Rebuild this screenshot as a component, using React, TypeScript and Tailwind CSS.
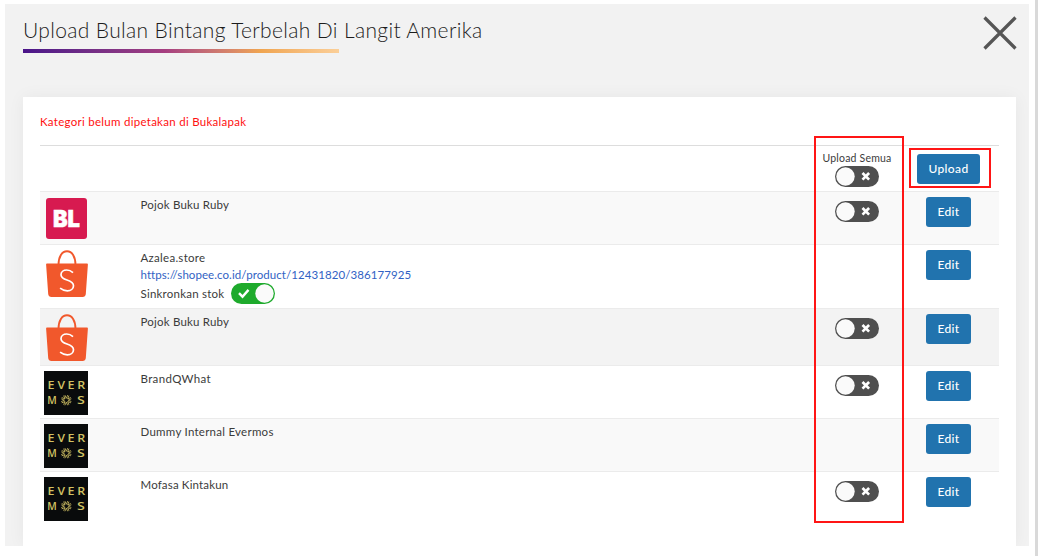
import React from "react";

function Toggle({ on = false }: { on?: boolean }) {
  return (
    <svg width="44" height="22" viewBox="0 0 44 22" className="block shrink-0">
      <rect x="0" y="0" width="44" height="21" rx="10.5" fill={on ? "#1eaa2c" : "#4f4f4f"} />
      <circle cx={on ? 33.5 : 10.5} cy="10.5" r="9.2" fill="#fafafa" />
      {on ? (
        <path d="M8 10.2l3.5 3.5 6-6.8" fill="none" stroke="#fff" strokeWidth="2.4" />
      ) : (
        <path d="M27.5 7l6.6 6.6M34.1 7l-6.6 6.6" stroke="#fff" strokeWidth="2.7" />
      )}
    </svg>
  );
}

function Bukalapak() {
  return (
    <svg width="41" height="41" viewBox="0 0 41 41" className="mt-1.5 ml-1.5 block">
      <rect width="41" height="41" rx="3" fill="#d71a50" />
      <text
        x="7"
        y="29"
        textLength="27"
        lengthAdjust="spacingAndGlyphs"
        fontFamily="Inter"
        fontWeight="900"
        fontSize="23.5"
        fill="#fff"
        stroke="#fff"
        strokeWidth="0.5"
      >
        BL
      </text>
    </svg>
  );
}

function Shopee() {
  return (
    <svg width="42" height="48" viewBox="0 0 42 48" className="mt-[5px] ml-[5.5px] block">
      <path d="M12.5 15C12.5 6.5 16 1.2 21 1.2S29.5 6.5 29.5 15" fill="none" stroke="#f1582c" strokeWidth="1.9" />
      <path d="M1 13.5h40q1 0 .9 1L39.8 44Q39.5 47 36.5 47h-31Q2.5 47 2.2 44L.1 14.5q-.1-1 .9-1z" fill="#f1582c" />
      <path
        d="M27 22.6C24.9 20.7 23 20 20.7 20c-3.3 0-5.7 1.9-5.7 4.7 0 3.2 2.6 4.2 6 5.3 3.8 1.2 6.5 2.5 6.5 5.7 0 3.2-2.7 5.1-6.2 5.1-2.7 0-5-.8-7.2-2.6"
        fill="none"
        stroke="#fff"
        strokeWidth="1.7"
      />
    </svg>
  );
}

function Evermos() {
  return (
    <svg width="44" height="44" viewBox="0 0 44 44" className="mt-[5px] ml-1 block">
      <rect width="44" height="44" fill="#090b0c" />
      <g fill="#d2c264" fontFamily="Open Sans" fontSize="10" fontWeight="600">
        <text x="3.5" y="18" textLength="7" lengthAdjust="spacingAndGlyphs">E</text>
        <text x="13.5" y="18" textLength="7.5" lengthAdjust="spacingAndGlyphs">V</text>
        <text x="23.5" y="18" textLength="7" lengthAdjust="spacingAndGlyphs">E</text>
        <text x="33.2" y="18" textLength="8" lengthAdjust="spacingAndGlyphs">R</text>
        <text x="3.3" y="32.6" textLength="9.5" lengthAdjust="spacingAndGlyphs">M</text>
        <text x="33" y="32.6" textLength="7.8" lengthAdjust="spacingAndGlyphs">S</text>
      </g>
      <g stroke="#d2c264" strokeWidth="0.8" fill="none">
        {[0, 45, 90, 135, 180, 225, 270, 315].map((a) => (
          <path key={a} d="M22.3 27.3l-1.4-3.2M22.3 27.3l1.4-3.2" transform={`rotate(${a} 22.3 29.2)`} />
        ))}
      </g>
    </svg>
  );
}

function Action({ children }: { children: React.ReactNode }) {
  return (
    <button className="block h-[29.5px] rounded-[3px] bg-[#2173ae] px-[11.5px] text-[12px] leading-[28px] font-medium tracking-[0.36px] text-white">
      {children}
    </button>
  );
}

type Row = { logo: React.ReactNode; name: string; spacing: string; size: string; toggle: boolean; link?: boolean };

const rows: Row[] = [
  { logo: <Bukalapak />, name: "Pojok Buku Ruby", spacing: "tracking-[0.2px]", size: "h-[53px] bg-[#f9f9f9]", toggle: true },
  { logo: <Shopee />, name: "Azalea.store", spacing: "tracking-[0.28px]", size: "h-[64px]", toggle: false, link: true },
  { logo: <Shopee />, name: "Pojok Buku Ruby", spacing: "tracking-[0.2px]", size: "h-[57px] bg-[#f3f3f3]", toggle: true },
  { logo: <Evermos />, name: "BrandQWhat", spacing: "tracking-[0.36px]", size: "h-[53px]", toggle: true },
  { logo: <Evermos />, name: "Dummy Internal Evermos", spacing: "tracking-[0.26px]", size: "h-[53px] bg-[#f9f9f9]", toggle: false },
  { logo: <Evermos />, name: "Mofasa Kintakun", spacing: "tracking-[0.16px]", size: "h-[53px]", toggle: true },
];

export default function App() {
  return (
    <div className="relative flex h-[556px] w-[1038px] justify-between overflow-hidden bg-white pt-1 pl-[5px] font-['Lato','Open_Sans',sans-serif] text-[#3b3b3b]">
      <div className="flex h-[542px] w-[1024px] flex-col overflow-hidden bg-[#f2f2f2] px-[18px]">
        <header className="flex h-[93px] w-[994px] shrink-0 items-start justify-between">
          <div>
            <h1 className="mt-[11px] h-[34px] text-[21px] leading-[30px] font-light tracking-[0.35px] whitespace-nowrap text-[#1c1c1c]">
              Upload Bulan Bintang Terbelah Di Langit Amerika
            </h1>
            <div className="h-[4px] w-[316px] bg-linear-to-r from-[#4a1389] via-[#a63e80] via-45% to-[#fbcf98]">
              <div className="ml-[142px] h-full w-[174px] bg-linear-to-r from-[#a63e80] via-[#f0a550] via-55% to-[#fbcf98]" />
            </div>
          </div>
          <svg width="34" height="34" viewBox="0 0 34 34" className="mt-3">
            <path d="M1.5 1.5l31 31M32.5 1.5L1.5 32.5" stroke="#555" strokeWidth="3.2" />
          </svg>
        </header>
        <main className="h-[449px] w-[993px] shrink-0 bg-white px-[17px] shadow-[0_0_16px_rgba(0,0,0,0.05)]">
          <p className="h-[48px] pt-[16px] text-[11.5px] leading-[17px] tracking-[0.28px] text-[#ff1010]">
            Kategori belum dipetakan di Bukalapak
          </p>
          <section className="w-[959px]">
            <div className="flex h-[46px] border-t border-[#dddddd]">
              <div className="w-[767px]" />
              <div className="flex w-[100px] flex-col items-center pt-[6px]">
                <span className="h-[14px] text-[10.5px] leading-[13px] tracking-[0.2px] whitespace-nowrap">Upload Semua</span>
                <Toggle />
              </div>
              <div className="flex w-[83px] justify-center pt-[8px]">
                <Action>Upload</Action>
              </div>
            </div>
            {rows.map((row, i) => (
              <div key={i} className={`flex items-start border-t border-[#ebebeb] ${row.size}`}>
                <div className="w-[100.5px]">{row.logo}</div>
                <div className="w-[666.5px] pt-[4px] text-[11.5px] leading-[17px]">
                  <div className={row.spacing}>{row.name}</div>
                  {row.link && (
                    <>
                      <a href="#" className="block tracking-[0.07px] text-[#3162c4]">
                        https://shopee.co.id/product/12431820/386177925
                      </a>
                      <div className="flex items-center gap-[7px] leading-[20px]">
                        <span className="tracking-[0.22px]">Sinkronkan stok</span>
                        <Toggle on />
                      </div>
                    </>
                  )}
                </div>
                <div className="flex w-[100px] justify-center pt-[9px]">{row.toggle && <Toggle />}</div>
                <div className="flex w-[83px] justify-center pt-[5px]">
                  <Action>Edit</Action>
                </div>
              </div>
            ))}
          </section>
        </main>
      </div>
      <div className="-mt-1 w-[3px] bg-[#d9d9d9]" />
      <div className="pointer-events-none absolute top-[136px] left-[814px] h-[387px] w-[90px] border-2 border-[#ff1515]" />
      <div className="pointer-events-none absolute top-[148px] left-[909px] h-[40px] w-[82px] border-2 border-[#ff1515]" />
    </div>
  );
}
